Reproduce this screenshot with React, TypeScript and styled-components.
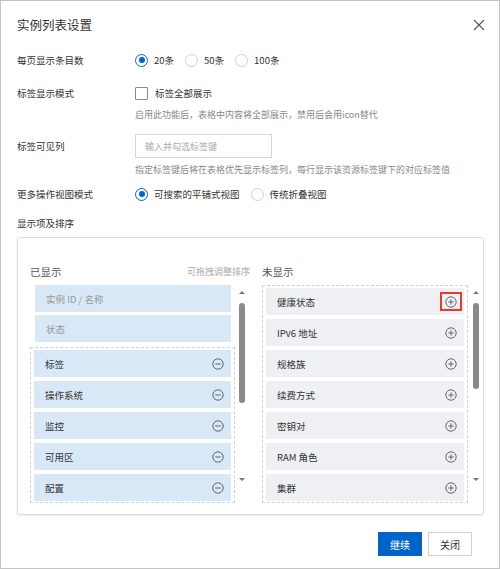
import styled, { createGlobalStyle } from "styled-components";

const GlobalStyle = createGlobalStyle`
  html, body {
    margin: 0;
    padding: 0;
    background: #fff;
  }
  * {
    box-sizing: border-box;
  }
  body {
    font-family: "Noto Sans CJK SC", "Noto Sans", "Liberation Sans", sans-serif;
    color: #333;
  }
`;

const shownFixed = ["实例 ID / 名称", "状态"];
const shownItems = ["标签", "操作系统", "监控", "可用区", "配置"];
const hiddenItems = ["健康状态", "IPv6 地址", "规格族", "续费方式", "密钥对", "RAM 角色", "集群"];

const Dialog = styled.div`
  width: 500px;
  height: 569px;
  border: 1px solid #c4c4c4;
  background: #fff;
  display: flex;
  flex-direction: column;
  overflow: hidden;
`;

const Header = styled.div`
  height: 49px;
  padding: 0 14px 0 16px;
  display: flex;
  align-items: center;
  justify-content: space-between;
`;

const Title = styled.div`
  font-size: 12.5px;
  color: #333;
  margin-top: -2px;
`;

const CloseBtn = styled.div`
  width: 12px;
  height: 12px;
  display: flex;
  color: #555;
  margin-top: -1px;
`;

const Body = styled.div`
  padding: 0 15px 0 16px;
  display: flex;
  flex-direction: column;
`;

const Row = styled.div<{ $mt?: number }>`
  display: grid;
  grid-template-columns: 118px 1fr;
  align-items: center;
  margin-top: ${(p) => p.$mt ?? 0}px;
`;

const Label = styled.div`
  font-size: 9.5px;
  color: #333;
  line-height: 20px;
`;

const Help = styled.div<{ $mt?: number }>`
  margin-left: 118px;
  margin-top: ${(p) => p.$mt ?? 0}px;
  font-size: 9px;
  color: #888;
  line-height: 16px;
  white-space: nowrap;
`;

const Options = styled.div`
  display: flex;
  align-items: center;
  gap: 11px;
  height: 20px;
`;

const Option = styled.label`
  display: flex;
  align-items: center;
  gap: 6px;
  font-size: 9.5px;
  color: #333;
`;

const Radio = styled.span<{ $checked?: boolean }>`
  width: 13px;
  height: 13px;
  border-radius: 50%;
  border: 1px solid ${(p) => (p.$checked ? "#0064c8" : "#d0d0d0")};
  display: flex;
  align-items: center;
  justify-content: center;
  &::after {
    content: "";
    width: 6px;
    height: 6px;
    border-radius: 50%;
    background: ${(p) => (p.$checked ? "#0064c8" : "transparent")};
  }
`;

const Checkbox = styled.span`
  width: 13px;
  height: 13px;
  border: 1px solid #888;
  border-radius: 1px;
  margin-right: 1px;
`;

const Input = styled.div`
  width: 137px;
  height: 24px;
  border: 1px solid #d6d6d6;
  padding: 0 9px;
  display: flex;
  align-items: center;
  font-size: 9px;
  color: #aaa;
`;

const SectionLabel = styled(Label)`
  margin-top: 9px;
`;

const SortBox = styled.div`
  margin-top: 4px;
  height: 278px;
  border: 1px solid #dcdcdc;
  border-radius: 3px;
  box-shadow: 0 1px 2px rgba(0, 0, 0, 0.08);
  padding: 24px 2px 0 12px;
  display: grid;
  grid-template-columns: 220px 1fr;
  column-gap: 12px;
`;

const Column = styled.div`
  display: flex;
  flex-direction: column;
`;

const ColHead = styled.div`
  height: 18px;
  display: flex;
  align-items: center;
  justify-content: space-between;
  font-size: 10.5px;
  color: #555;
`;

const ColHint = styled.span`
  font-size: 9px;
  color: #aaa;
`;

const ListWrap = styled.div`
  margin-top: 5px;
  height: 218px;
  display: flex;
`;

const ListArea = styled.div<{ $inset: number }>`
  width: ${(p) => p.$inset}px;
  display: flex;
  flex-direction: column;
  overflow: hidden;
`;

const FixedList = styled.div`
  display: flex;
  flex-direction: column;
  gap: 3px;
  padding: 0 4px 0 5px;
  margin-bottom: 5px;
`;

const Dashed = styled.div`
  flex: 1;
  border: 1px dashed #c9d3dc;
  padding: 2px 3px;
  display: flex;
  flex-direction: column;
  gap: 4px;
  overflow: hidden;
  min-height: 0;
`;

const Item = styled.div<{ $tone: "shown" | "hidden"; $fixed?: boolean }>`
  flex: none;
  height: 27px;
  padding: 0 7px 0 11px;
  display: flex;
  align-items: center;
  justify-content: space-between;
  font-size: 9.5px;
  color: ${(p) => (p.$fixed ? "#999" : "#333")};
  background: ${(p) => (p.$tone === "shown" ? "#d8e8f6" : "#eef0f4")};
`;

const IconBtn = styled.span<{ $marked?: boolean }>`
  display: flex;
  align-items: center;
  justify-content: center;
  color: #666;
  width: ${(p) => (p.$marked ? "22px" : "12px")};
  height: ${(p) => (p.$marked ? "19px" : "12px")};
  margin-right: ${(p) => (p.$marked ? "-5px" : "0")};
  border: ${(p) => (p.$marked ? "2px solid #e33b2e" : "none")};
`;

const Scroll = styled.div<{ $ml: number }>`
  width: 7px;
  margin-left: ${(p) => p.$ml}px;
  display: flex;
  flex-direction: column;
  align-items: center;
  position: relative;
  &::before {
    content: "";
    position: absolute;
    top: 6px;
    border-left: 3px solid transparent;
    border-right: 3px solid transparent;
    border-bottom: 3px solid #777;
  }
  &::after {
    content: "";
    position: absolute;
    bottom: 22px;
    border-left: 3px solid transparent;
    border-right: 3px solid transparent;
    border-top: 3px solid #777;
  }
`;

const Thumb = styled.div<{ $top: number; $h: number }>`
  margin-top: ${(p) => p.$top}px;
  width: 6px;
  height: ${(p) => p.$h}px;
  border-radius: 3px;
  background: #8a8a8a;
`;

const Footer = styled.div`
  margin-top: 17px;
  display: flex;
  justify-content: flex-end;
  gap: 6px;
  padding-right: 12px;
`;

const Button = styled.button<{ $primary?: boolean }>`
  width: 44px;
  height: 24px;
  font-family: inherit;
  font-size: 10px;
  border-radius: 0;
  border: 1px solid ${(p) => (p.$primary ? "#0064c8" : "#d0d0d0")};
  background: ${(p) => (p.$primary ? "#0064c8" : "#fff")};
  color: ${(p) => (p.$primary ? "#fff" : "#333")};
  padding: 0;
`;

const MinusIcon = () => (
  <svg width="12" height="12" viewBox="0 0 12 12" fill="none" stroke="currentColor" strokeWidth="1">
    <circle cx="6" cy="6" r="5.2" />
    <path d="M3.3 6h5.4" />
  </svg>
);

const PlusIcon = () => (
  <svg width="12" height="12" viewBox="0 0 12 12" fill="none" stroke="currentColor" strokeWidth="1">
    <circle cx="6" cy="6" r="5.2" />
    <path d="M3.3 6h5.4M6 3.3v5.4" />
  </svg>
);

export default function App() {
  return (
    <>
      <GlobalStyle />
      <Dialog>
        <Header>
          <Title>实例列表设置</Title>
          <CloseBtn>
            <svg width="12" height="12" viewBox="0 0 12 12" stroke="currentColor" strokeWidth="1.1">
              <path d="M1 1l10 10M11 1L1 11" />
            </svg>
          </CloseBtn>
        </Header>
        <Body>
          <Row>
            <Label>每页显示条目数</Label>
            <Options>
              <Option><Radio $checked />20条</Option>
              <Option><Radio />50条</Option>
              <Option><Radio />100条</Option>
            </Options>
          </Row>
          <Row $mt={13}>
            <Label>标签显示模式</Label>
            <Options>
              <Option><Checkbox />标签全部展示</Option>
            </Options>
          </Row>
          <Help $mt={4}>启用此功能后，表格中内容将全部展示，禁用后会用icon替代</Help>
          <Row $mt={11}>
            <Label>标签可见列</Label>
            <Input>输入并勾选标签键</Input>
          </Row>
          <Help $mt={4}>指定标签键后将在表格优先显示标签列，每行显示该资源标签键下的对应标签值</Help>
          <Row $mt={6}>
            <Label>更多操作视图模式</Label>
            <Options>
              <Option><Radio $checked />可搜索的平铺式视图</Option>
              <Option><Radio />传统折叠视图</Option>
            </Options>
          </Row>
          <SectionLabel>显示项及排序</SectionLabel>
          <SortBox>
            <Column>
              <ColHead>
                <span>已显示</span>
                <ColHint>可拖拽调整排序</ColHint>
              </ColHead>
              <ListWrap>
                <ListArea $inset={205}>
                  <FixedList>
                    {shownFixed.map((t) => (
                      <Item key={t} $tone="shown" $fixed>{t}</Item>
                    ))}
                  </FixedList>
                  <Dashed>
                    {shownItems.map((t) => (
                      <Item key={t} $tone="shown">
                        {t}
                        <IconBtn><MinusIcon /></IconBtn>
                      </Item>
                    ))}
                  </Dashed>
                </ListArea>
                <Scroll $ml={3}>
                  <Thumb $top={18} $h={100} />
                </Scroll>
              </ListWrap>
            </Column>
            <Column>
              <ColHead>
                <span>未显示</span>
              </ColHead>
              <ListWrap>
                <ListArea $inset={206}>
                  <Dashed>
                    {hiddenItems.map((t, i) => (
                      <Item key={t} $tone="hidden">
                        {t}
                        <IconBtn $marked={i === 0}><PlusIcon /></IconBtn>
                      </Item>
                    ))}
                  </Dashed>
                </ListArea>
                <Scroll $ml={4}>
                  <Thumb $top={18} $h={86} />
                </Scroll>
              </ListWrap>
            </Column>
          </SortBox>
          <Footer>
            <Button $primary>继续</Button>
            <Button>关闭</Button>
          </Footer>
        </Body>
      </Dialog>
    </>
  );
}
